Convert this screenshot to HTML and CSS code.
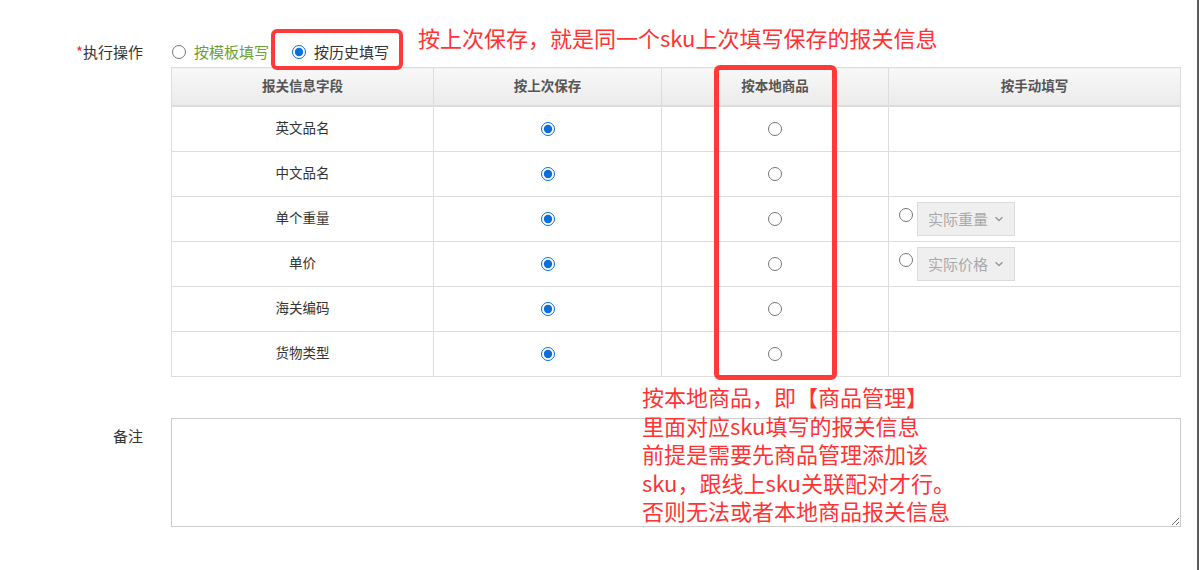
FILE: index.html
```html
<!DOCTYPE html>
<html lang="zh-CN">
<head>
    <meta charset="UTF-8">
    <title>报关信息</title>
    <link rel="stylesheet" href="styles.css">
</head>
<body>
    <div class="page">
        <div class="form">
            <div class="form-row">
                <div class="label"><span class="req">*</span>执行操作</div>
                <div class="content">
                    <div class="ops">
                        <label class="op tpl"><input type="radio" name="mode">按模板填写</label>
                        <label class="op"><input type="radio" name="mode" checked>按历史填写</label>
                    </div>
                    <table class="grid">
                        <colgroup>
                            <col style="width:262px">
                            <col style="width:228px">
                            <col style="width:227px">
                            <col>
                        </colgroup>
                        <thead>
                            <tr>
                                <th>报关信息字段</th>
                                <th>按上次保存</th>
                                <th>按本地商品</th>
                                <th>按手动填写</th>
                            </tr>
                        </thead>
                        <tbody id="rows"></tbody>
                    </table>
                </div>
            </div>
            <div class="form-row notes">
                <div class="label">备注</div>
                <div class="content">
                    <textarea class="remark"></textarea>
                </div>
            </div>
        </div>

        <!-- annotations -->
        <div class="mark mark-op"></div>
        <div class="mark mark-col"></div>
        <div class="tip tip-top">按上次保存，就是同一个sku上次填写保存的报关信息</div>
        <div class="tip tip-side">
            <div>按本地商品，即【商品管理】</div>
            <div>里面对应sku填写的报关信息</div>
            <div>前提是需要先商品管理添加该</div>
            <div>sku，跟线上sku关联配对才行。</div>
            <div>否则无法或者本地商品报关信息</div>
        </div>
    </div>

    <script>
        const fields = [
            { name: '英文品名' },
            { name: '中文品名' },
            { name: '单个重量', manual: '实际重量' },
            { name: '单价', manual: '实际价格' },
            { name: '海关编码' },
            { name: '货物类型' }
        ];
        const rows = document.getElementById('rows');

        fields.forEach((f, i) => {
            let manual = '';
            if (f.manual) {
                manual = `<div class="manual">
                    <input type="radio" name="f${i}">
                    <div class="fake-select">${f.manual}
                        <svg width="10" height="6" viewBox="0 0 10 6"><path d="M1.5 1.2 5 4.6 8.5 1.2" fill="none" stroke="#999" stroke-width="1.4"/></svg>
                    </div>
                </div>`;
            }
            rows.innerHTML += `<tr>
                <td class="name">${f.name}</td>
                <td class="center"><input type="radio" name="f${i}" checked></td>
                <td class="center"><input type="radio" name="f${i}"></td>
                <td>${manual}</td>
            </tr>`;
        });
    </script>
</body>
</html>
```

FILE: styles.css
```css
body {
    margin: 0;
    background: #fff;
    color: #333;
    font-family: "Noto Sans CJK SC", "Noto Sans", sans-serif;
}
.page {
    position: relative;
    width: 1199px;
    height: 570px;
    box-sizing: border-box;
    border-right: 2px solid #5a5a5a;
    overflow: hidden;
}
.form {
    padding-top: 42px;
}
.form-row {
    display: flex;
}
.label {
    width: 143px;
    padding-right: 28px;
    text-align: right;
    font-size: 15px;
    line-height: 20px;
    color: #333;
}
.req {
    color: #e33;
}
.content {
    width: 1010px;
}
.ops {
    height: 25px;
    display: flex;
    font-size: 15px;
    line-height: 20px;
}
.op {
    display: flex;
    align-items: center;
    height: 20px;
    gap: 8px;
    margin-right: 22px;
    color: #333;
}
.op.tpl {
    color: #6e9f3a;
}
input[type="radio"] {
    margin: 0;
    width: 14px;
    height: 14px;
    accent-color: #0b6fd6;
}
.op input {
    margin-left: 1px;
}
.grid {
    width: 1010px;
    border-collapse: collapse;
    table-layout: fixed;
    font-size: 13.5px;
}
.grid th,
.grid td {
    border: 1px solid #ddd;
    padding: 0;
}
.grid th {
    height: 34px;
    padding-bottom: 3px;
    background: linear-gradient(#f8f8f8, #ebebeb);
    border-bottom: 2px solid #dcdcdc;
    color: #555;
    font-weight: bold;
}
.grid td {
    height: 39px;
    vertical-align: middle;
}
.grid td.name {
    text-align: center;
    padding-bottom: 5px;
}
.grid td.center {
    text-align: center;
    padding-bottom: 4px;
}
.grid td.center input {
    vertical-align: middle;
}
.manual {
    display: flex;
    align-items: flex-start;
    padding-left: 10px;
    gap: 4px;
}
.manual input {
    margin-top: 6px;
}
.fake-select {
    width: 98px;
    height: 34px;
    box-sizing: border-box;
    border: 1px solid #dcdcdc;
    background: #efefef;
    color: #a9a9a9;
    font-size: 15px;
    line-height: 32px;
    padding-left: 10px;
    display: flex;
    align-items: center;
    gap: 6px;
}
.notes {
    margin-top: 41px;
}
.notes .label {
    padding-top: 8px;
}
.remark {
    display: block;
    width: 1010px;
    height: 109px;
    box-sizing: border-box;
    border: 1px solid #ccc;
    margin: 0;
    resize: both;
}
.mark {
    position: absolute;
    border-style: solid;
    border-color: #ff3838;
    border-radius: 6px;
    box-sizing: border-box;
}
.mark-op {
    left: 271px;
    top: 29px;
    width: 132px;
    height: 41px;
    border-width: 4px;
}
.mark-col {
    left: 714px;
    top: 65px;
    width: 123px;
    height: 315px;
    border-width: 5px;
}
.tip {
    position: absolute;
    color: #ff3333;
    font-size: 22px;
    white-space: nowrap;
}
.tip-top {
    left: 418px;
    top: 22px;
    line-height: 30px;
}
.tip-side {
    left: 642px;
    top: 382px;
    line-height: 28.5px;
}
.tip-side div {
    height: 28.5px;
}
```
